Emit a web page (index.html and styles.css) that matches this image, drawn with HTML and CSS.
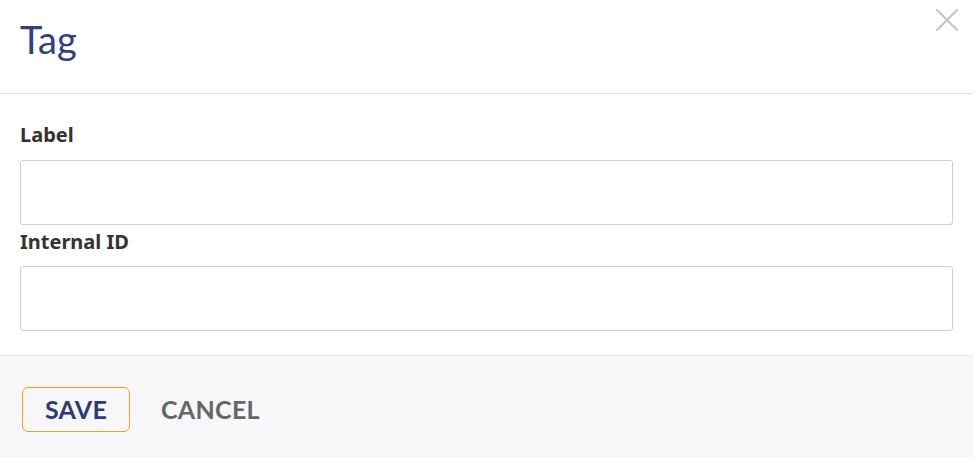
FILE: index.html
```html
<!DOCTYPE html>
<html lang="en">
<head>
<meta charset="utf-8">
<title>Tag</title>
<link rel="stylesheet" href="styles.css">
</head>
<body>
<div class="modal">
  <div class="modal-header">
    <h1 class="modal-title">Tag</h1>
    <button class="close-btn" aria-label="Close">
      <svg width="24" height="24" viewBox="0 0 24 24"><path d="M2 2 L22 22 M22 2 L2 22" stroke="#c8c8c8" stroke-width="2.4" stroke-linecap="round" fill="none"/></svg>
    </button>
  </div>
  <div class="modal-body">
    <label class="field-label">Label</label>
    <input class="field-input" type="text">
    <label class="field-label second">Internal ID</label>
    <input class="field-input" type="text">
  </div>
  <div class="modal-footer">
    <button class="btn btn-save">SAVE</button>
    <button class="btn btn-cancel">CANCEL</button>
  </div>
</div>
</body>
</html>
```
FILE: styles.css
```css
html, body {
  margin: 0;
  padding: 0;
  background: #ffffff;
  font-family: Lato, "Open Sans", "Liberation Sans", sans-serif;
}
.modal {
  width: 973px;
  position: relative;
  background: #ffffff;
}
.modal-header {
  height: 94px;
  box-sizing: border-box;
  padding: 17px 20px 0 20px;
  border-bottom: 1px solid #e4e4e6;
}
.modal-title {
  margin: 0;
  font-size: 38px;
  line-height: 44px;
  font-weight: 400;
  color: #33407a;
}
.close-btn {
  position: absolute;
  top: 8px;
  right: 14px;
  width: 24px;
  height: 24px;
  padding: 0;
  border: none;
  background: none;
  cursor: pointer;
}
.close-btn svg { display: block; }
.modal-body {
  padding: 29px 20px 24px 20px;
  display: flex;
  flex-direction: column;
}
.field-label {
  font-family: "Noto Sans", Lato, sans-serif;
  font-size: 20px;
  line-height: 24px;
  font-weight: 700;
  color: #333333;
  margin-bottom: 13px;
}
.field-label.second {
  margin-top: 5px;
  margin-bottom: 12px;
}
.field-input {
  box-sizing: border-box;
  width: 933px;
  height: 65px;
  border: 1px solid #cfcfd1;
  border-radius: 3px;
  margin: 0;
  padding: 0 12px;
  font-family: inherit;
  font-size: 18px;
  background: #ffffff;
}
.modal-footer {
  height: 102px;
  box-sizing: border-box;
  border-top: 1px solid #e4e4e6;
  background: #f7f7f9;
  padding: 31px 20px 0 22px;
  display: flex;
  align-items: flex-start;
  gap: 11px;
}
.btn {
  height: 45px;
  font-family: inherit;
  font-size: 25px;
  font-weight: 700;
  background: none;
  cursor: pointer;
  letter-spacing: 0.3px;
  line-height: 43px;
}
.btn-save {
  width: 108px;
  border: 1.5px solid #f5a21c;
  border-radius: 6px;
  color: #2e3b73;
  padding: 0;
}
.btn-cancel {
  border: none;
  color: #666666;
  padding: 0 20px;
}
```
